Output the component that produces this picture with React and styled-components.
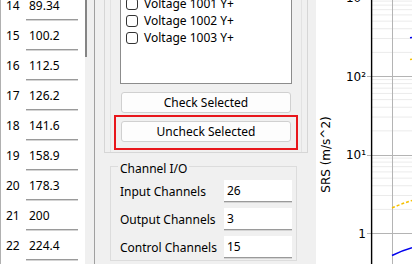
import React from "react";
import styled, { createGlobalStyle } from "styled-components";

const Global = createGlobalStyle`
  html, body { margin: 0; padding: 0; background: #f0f0f0; }
  * { box-sizing: border-box; }
`;

const Root = styled.div`
  display: flex;
  width: 412px;
  height: 264px;
  overflow: hidden;
  font-family: "Noto Sans", "Liberation Sans", sans-serif;
  font-size: 12px;
  color: #000;
`;

/* ---------- left table ---------- */
const TablePanel = styled.div`
  width: 85px;
  flex: none;
  background: #fff;
  border-left: 1px solid #b0b0b0;
  overflow: hidden;
`;
const TableBody = styled.div`
  margin-top: -10px;
`;
const Row = styled.div`
  display: flex;
  align-items: flex-end;
  height: 30px;
  padding-left: 5px;
`;
const NumCell = styled.div`
  width: 20px;
  line-height: 24px;
  padding-bottom: 2px;
`;
const ValueCell = styled.div`
  width: 52px;
  height: 26px;
  line-height: 24px;
  padding-left: 3px;
  background: #fff;
  border-bottom: 1px solid #9a9a9a;
  box-shadow: 0 1px 0 #d4d4d4;
`;

const ScrollTrack = styled.div`
  width: 9px;
  flex: none;
  background: #f0f0f0;
`;
const Thumb = styled.div`
  width: 2px;
  height: 57px;
  background: #858585;
`;

/* ---------- middle panel ---------- */
const MiddlePanel = styled.div`
  width: 222px;
  flex: none;
  background: #f0f0f0;
  border-left: 1px solid #a0a0a0;
  padding: 0 8px 0 9px;
`;
const OuterFrame = styled.div`
  margin-top: -20px;
  border: 1px solid #d6d6d6;
  border-top: none;
`;
const InnerFrame = styled.div`
  margin: 0 5px;
  border-left: 1px solid #e2e2e2;
  border-right: 1px solid #e2e2e2;
  padding-bottom: 2px;
`;
const ListBox = styled.div`
  margin: 0 9px;
  height: 104px;
  background: #fff;
  border: 1px solid #8c8c8c;
  padding-top: 14px;
`;
const Item = styled.label`
  display: flex;
  align-items: center;
  gap: 6px;
  height: 17px;
  padding-left: 5px;
`;
const Box = styled.span`
  width: 12px;
  height: 12px;
  border: 1px solid #333;
  border-radius: 3px;
  background: #fff;
  flex: none;
`;
const Button = styled.button`
  display: block;
  width: ${(p) => (p.$inset ? "100%" : "170px")};
  height: 21px;
  margin: ${(p) => (p.$inset ? "0" : "8px 10px 0")};
  padding: 0;
  font: inherit;
  line-height: 19px;
  color: #000;
  background: #fdfdfd;
  border: 1px solid #d0d0d0;
  border-radius: 3px;
  text-align: center;
`;
const Highlight = styled.div`
  margin: 2px 3px 0;
  border: 2px solid #e8161b;
  padding: 4px 5px 6px;
`;

const Group = styled.fieldset`
  margin: 3px 0 0 6px;
  width: 187px;
  min-width: 0;
  border: 1px solid #dcdcdc;
  padding: 3px 4px 2px 9px;
`;
const Legend = styled.legend`
  padding: 5px 2px 0;
  margin-left: -2px;
  line-height: 16px;
`;
const Grid = styled.div`
  display: grid;
  grid-template-columns: 104px 68px;
  grid-auto-rows: 22px;
  row-gap: 6px;
  align-items: center;
`;
const Field = styled.input`
  width: 68px;
  height: 22px;
  border: none;
  border-bottom: 1px solid #9a9a9a;
  box-shadow: 0 1px 0 #d4d4d4;
  background: #fff;
  font: inherit;
  color: #000;
  padding: 0 0 0 3px;
  outline: none;
`;

/* ---------- plot ---------- */
const PlotPanel = styled.div`
  width: 96px;
  flex: none;
  background: #fff;
  svg { display: block; }
`;

const rows = [
  ["14", "89.34"],
  ["15", "100.2"],
  ["16", "112.5"],
  ["17", "126.2"],
  ["18", "141.6"],
  ["19", "158.9"],
  ["20", "178.3"],
  ["21", "200"],
  ["22", "224.4"],
];

const channels = ["Voltage 1001 Y+", "Voltage 1002 Y+", "Voltage 1003 Y+"];
const io = [
  ["Input Channels", "26"],
  ["Output Channels", "3"],
  ["Control Channels", "15"],
];

const yOf = (v) => 233 - 78.5 * v;

function Plot() {
  const minors = [];
  for (let k = 0; k < 3; k++) {
    for (let m = 2; m <= 9; m++) minors.push(yOf(k + Math.log10(m)));
  }
  const majors = [0, 1, 2, 3];
  const labels = ["1", "10¹", "10²", "10³"];
  return (
    <svg width="96" height="264" viewBox="0 0 96 264">
      {minors.map((y, i) => (
        <line key={i} x1="56" x2="96" y1={y} y2={y} stroke="#ebebeb" strokeWidth="1" />
      ))}
      {majors.map((k) => (
        <line key={k} x1="51" x2="96" y1={Math.round(yOf(k)) + 0.5} y2={Math.round(yOf(k)) + 0.5} stroke="#b4b4b4" strokeWidth="1" />
      ))}
      <line x1="76.5" x2="76.5" y1="0" y2="264" stroke="#b4b4b4" strokeWidth="1" />
      <line x1="55.6" x2="55.6" y1="0" y2="264" stroke="#000" strokeWidth="1.4" />
      {majors.map((k) => (
        <text
          key={k}
          x="50"
          y={yOf(k) + 4.5}
          textAnchor="end"
          fontFamily="DejaVu Sans, sans-serif"
          fontSize="12"
          fill="#000"
        >
          {labels[k]}
        </text>
      ))}
      <text
        x="14"
        y="154.5"
        transform="rotate(-90 14 154.5)"
        textAnchor="middle"
        fontFamily="DejaVu Sans, sans-serif"
        fontSize="12"
        fill="#000"
      >
        SRS (m/s^2)
      </text>
      <path d="M76 208 Q86 203.5 96 200.5" fill="none" stroke="#f5c000" strokeWidth="1.5" strokeDasharray="3 2" />
      <path d="M76 255.5 Q86 250.5 96 247.7" fill="none" stroke="#0000ee" strokeWidth="1.5" />
      <path d="M94 37.8 L96 37.6" fill="none" stroke="#0000ee" strokeWidth="1.5" />
      <path d="M94 59.4 L96 59.2" fill="none" stroke="#f5c000" strokeWidth="1.5" />
    </svg>
  );
}

export default function App() {
  return (
    <>
      <Global />
      <Root>
        <TablePanel>
          <TableBody>
            {rows.map(([n, v]) => (
              <Row key={n}>
                <NumCell>{n}</NumCell>
                <ValueCell>{v}</ValueCell>
              </Row>
            ))}
          </TableBody>
        </TablePanel>
        <ScrollTrack>
          <Thumb />
        </ScrollTrack>
        <MiddlePanel>
          <OuterFrame>
            <InnerFrame>
              <ListBox>
                {channels.map((c) => (
                  <Item key={c}>
                    <Box />
                    {c}
                  </Item>
                ))}
              </ListBox>
              <Button>Check Selected</Button>
              <Highlight>
                <Button $inset>Uncheck Selected</Button>
              </Highlight>
            </InnerFrame>
          </OuterFrame>
          <Group>
            <Legend>Channel I/O</Legend>
            <Grid>
              {io.map(([l, v]) => (
                <React.Fragment key={l}>
                  <span>{l}</span>
                  <Field readOnly defaultValue={v} />
                </React.Fragment>
              ))}
            </Grid>
          </Group>
        </MiddlePanel>
        <PlotPanel>
          <Plot />
        </PlotPanel>
      </Root>
    </>
  );
}
